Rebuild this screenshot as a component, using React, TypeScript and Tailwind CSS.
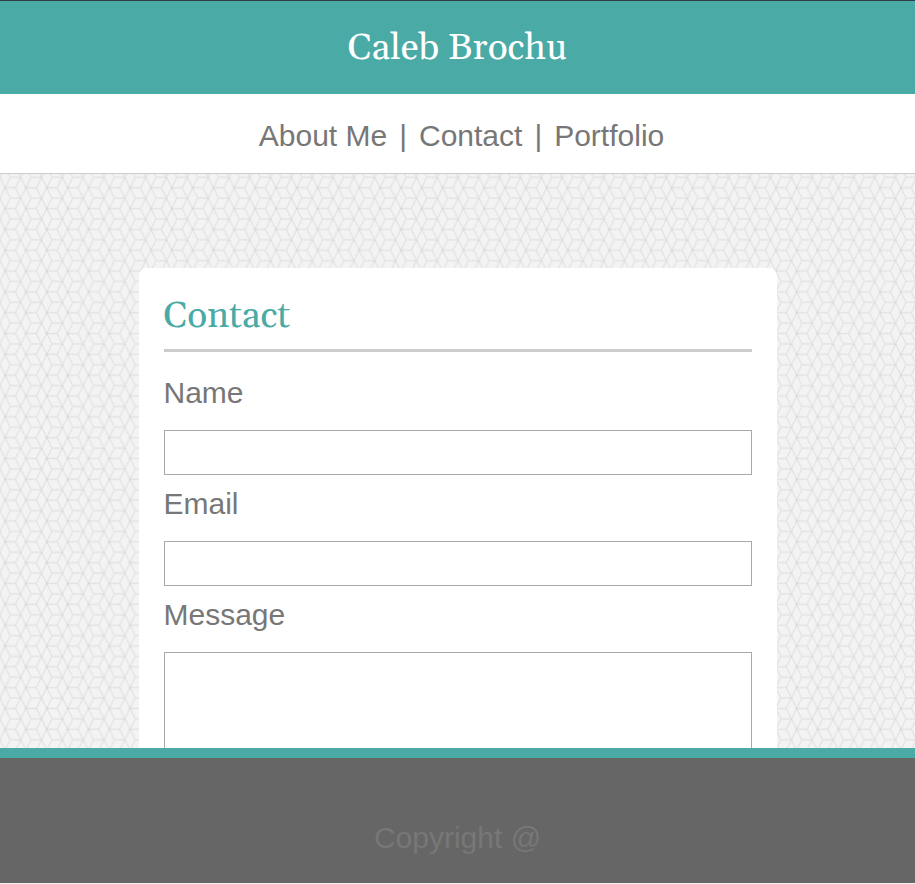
const serif = "font-[Georgia,Gelasio,'Liberation_Serif',serif]";

function CubeBackdrop() {
  return (
    <svg className="absolute inset-0 h-full w-full" aria-hidden="true">
      <defs>
        <pattern id="cubes" width="20.83" height="20.83" patternUnits="userSpaceOnUse" x="10.3" y="3.3">
          <rect width="21" height="21" fill="#f3f3f3" />
          <g stroke="#e3e3e3" strokeWidth="1.3" fill="none">
            <path d="M0 0H10.42M0 20.83H10.42M0 10.42H5.2M15.6 10.42H20.83" />
            <path d="M10.42 0 5.2 10.42 10.42 20.83 15.6 10.42Z" />
            <path d="M20.83 0 15.6 10.42 20.83 20.83" />
          </g>
          <g fill="#d6d6d6">
            <circle cx="15.6" cy="10.42" r="1" />
            <circle cx="10.42" cy="0.4" r="0.8" />
          </g>
        </pattern>
      </defs>
      <rect width="100%" height="100%" fill="url(#cubes)" />
    </svg>
  );
}

function Field({ id, label, type }: { id: string; label: string; type: string }) {
  return (
    <div className="mb-1">
      <label htmlFor={id} className="block pb-3 text-[30px] leading-[50px]">{label}</label>
      <input id={id} type={type} className="block h-[45px] w-full border border-[#a9a9a9] bg-white px-2 outline-none" />
    </div>
  );
}

export default function App() {
  return (
    <div className="flex h-screen flex-col overflow-hidden bg-[#f2f2f2] font-['Liberation_Sans',Arial,sans-serif] text-[#777777]">
      <header className="shrink-0 border-b border-[#cccccc] bg-white">
        <div className="border-t border-[#333b42] bg-[#4aaaa5] pt-[21px] pb-[19px] text-center">
          <h1 className={`${serif} text-[37px] leading-[53px] text-white`}>Caleb Brochu</h1>
        </div>
        <nav className="flex justify-center gap-3 pt-4 pb-3 pl-2 text-[30px] leading-[51px]">
          <a href="#about">About Me</a>
          <span>|</span>
          <a href="#contact">Contact</a>
          <span>|</span>
          <a href="#portfolio">Portfolio</a>
        </nav>
      </header>
      <main className="relative min-h-0 flex-1 overflow-hidden">
        <CubeBackdrop />
        <section id="contact" className="relative mx-auto mt-[94px] w-[638px] max-w-full rounded-lg bg-white px-[25px] pt-6 pb-8">
          <h2 className={`${serif} mb-4 border-b-3 border-[#cccccc] pb-[7px] text-[37px] leading-[50px] text-[#4aaaa5]`}>Contact</h2>
          <form>
            <Field id="name" label="Name" type="text" />
            <Field id="email" label="Email" type="email" />
            <label htmlFor="message" className="block pb-3 text-[30px] leading-[50px]">Message</label>
            <textarea id="message" className="block h-[200px] w-full resize-none border border-[#a9a9a9] bg-white p-2 outline-none" />
          </form>
        </section>
      </main>
      <footer className="mb-px shrink-0 border-t-10 border-[#4aaaa5] bg-[#666666] pt-[55px] pb-5 text-center text-[30px] leading-[50px]">
        Copyright @
      </footer>
    </div>
  );
}
